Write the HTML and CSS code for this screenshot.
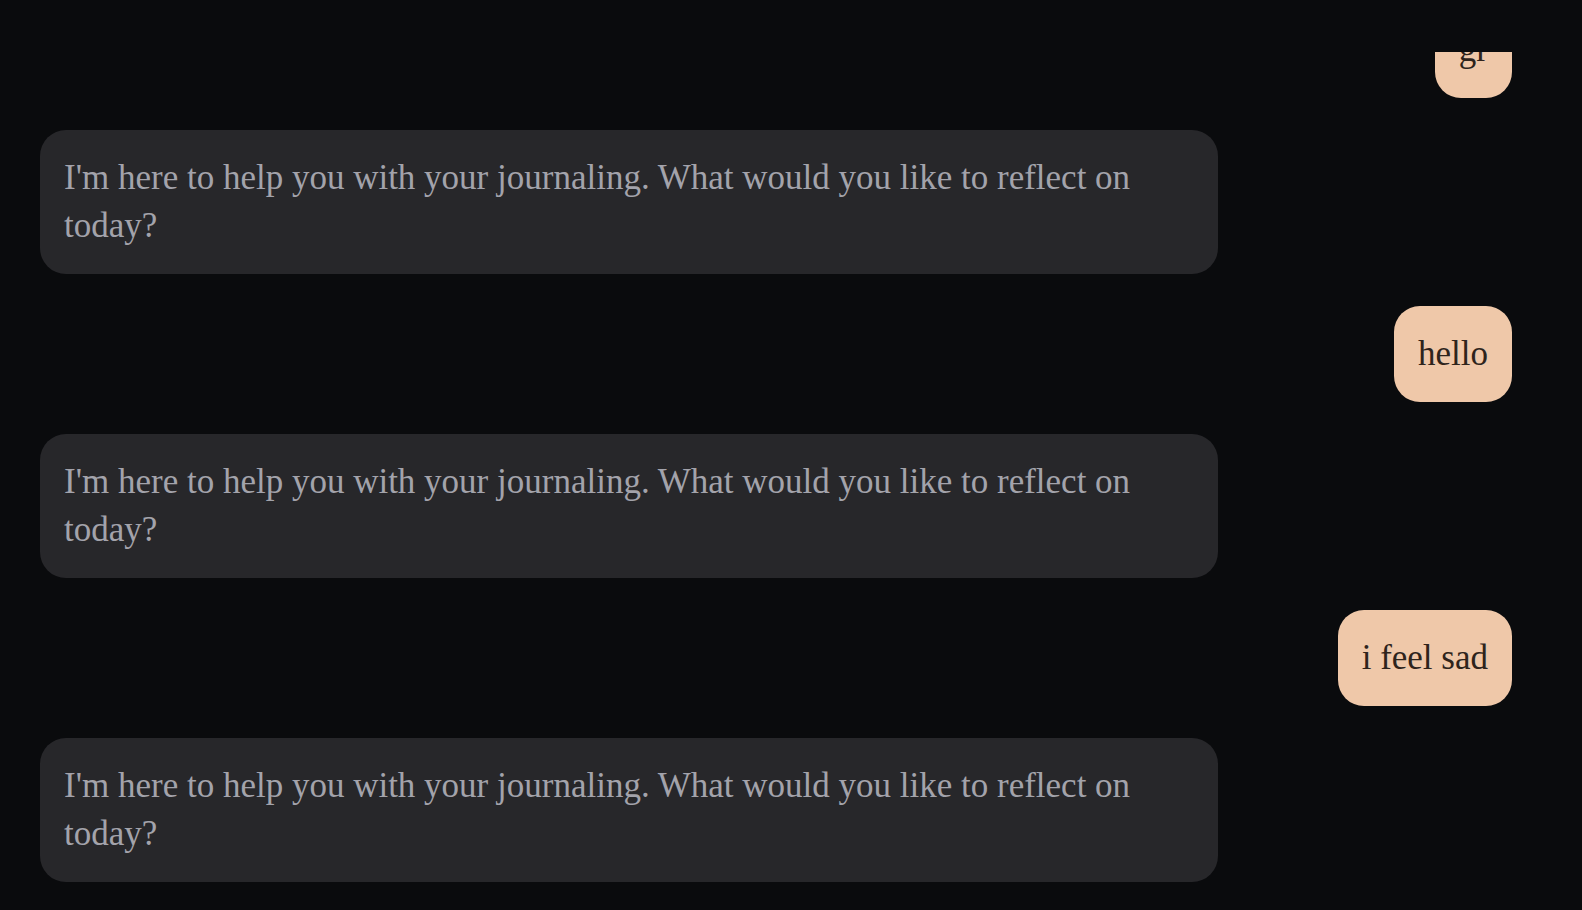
FILE: index.html
```html
<!DOCTYPE html>
<html lang="en">
<head>
<meta charset="utf-8">
<title>Journal chat</title>
<link rel="stylesheet" href="styles.css">
</head>
<body>
<div class="app">
  <header class="topbar"></header>
  <main class="messages">
    <div class="thread">
      <div class="msg msg-user">gr</div>
      <div class="msg msg-bot">I'm here to help you with your journaling. What would you like to reflect on today?</div>
      <div class="msg msg-user">hello</div>
      <div class="msg msg-bot">I'm here to help you with your journaling. What would you like to reflect on today?</div>
      <div class="msg msg-user">i feel sad</div>
      <div class="msg msg-bot">I'm here to help you with your journaling. What would you like to reflect on today?</div>
    </div>
  </main>
</div>
</body>
</html>
```
FILE: styles.css
```css
html, body {
  margin: 0;
  padding: 0;
  height: 100%;
  background: #0a0b0d;
}

body {
  font-family: "Liberation Serif", "Times New Roman", serif;
  font-size: 35px;
  line-height: 48px;
}

.app {
  display: flex;
  flex-direction: column;
  height: 100vh;
}

.topbar {
  height: 52px;
  flex: none;
}

.messages {
  flex: 1;
  min-height: 0;
  overflow: hidden;
  display: flex;
  flex-direction: column;
  justify-content: flex-end;
}

.thread {
  display: flex;
  flex-direction: column;
  gap: 32px;
  padding: 0 70px 28px 40px;
}

.msg {
  padding: 24px;
  border-radius: 26px;
  box-sizing: border-box;
}

.msg-user {
  align-self: flex-end;
  background: #efc8a9;
  color: #2e241c;
}

.msg-bot {
  align-self: flex-start;
  max-width: 80%;
  width: 80%;
  background: #27272a;
  color: #a3a3ab;
}
```
